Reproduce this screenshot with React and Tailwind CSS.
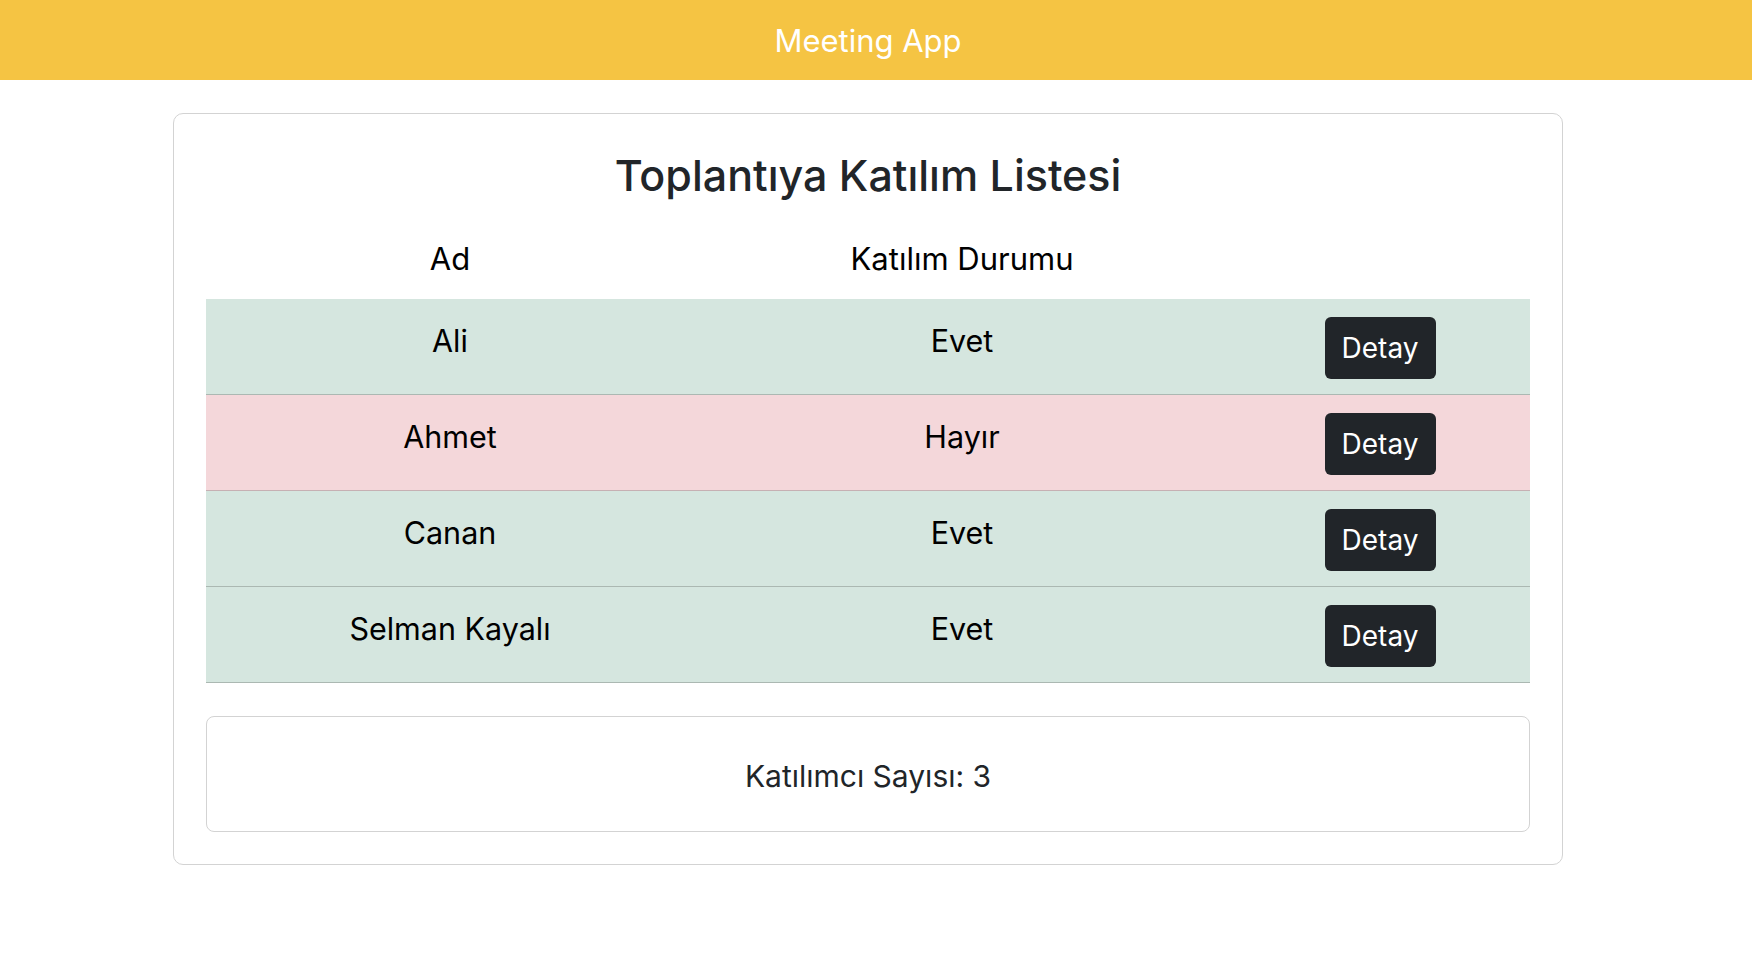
const attendees = [
  { name: 'Ali', status: 'Evet' },
  { name: 'Ahmet', status: 'Hayır' },
  { name: 'Canan', status: 'Evet' },
  { name: 'Selman Kayalı', status: 'Evet' },
]

function Row({ name, status }) {
  const yes = status === 'Evet'
  return (
    <div
      className={
        yes
          ? 'grid h-[96px] grid-cols-[488px_536px_300px] border-b border-[#abb8b2] bg-[#d5e6df] text-black'
          : 'grid h-[96px] grid-cols-[488px_536px_300px] border-b border-[#c6b0b3] bg-[#f4d7da] text-black'
      }
    >
      <div className="pt-[22px] text-center text-[30.5px] leading-[40px]">{name}</div>
      <div className="pt-[22px] text-center text-[30.5px] leading-[40px]">{status}</div>
      <div className="flex justify-center pt-[18px]">
        <button className="h-[62px] w-[111px] rounded-[6px] bg-[#212529] text-[28px] leading-[42px] text-white">
          Detay
        </button>
      </div>
    </div>
  )
}

export default function App() {
  const count = attendees.filter(a => a.status === 'Evet').length

  return (
    <div className="min-h-screen bg-white font-['Inter','Noto_Sans',sans-serif]">
      {/* ── Nav ── */}
      <header className="flex h-[80px] items-center bg-[#f5c443]">
        <div className="w-[1736px] pt-[2px] text-center text-[31px] leading-[40px] text-white">Meeting App</div>
      </header>

      <div className="w-[1736px]">
        {/* ── Card ── */}
        <main className="mx-auto mt-[33px] w-[1390px] rounded-[10px] border border-[#d3d3d3] px-8 pb-8 pt-[34px]">
          <h1 className="text-center text-[43px] font-medium leading-[54px] text-[#212529]">
            Toplantıya Katılım Listesi
          </h1>

          <div className="grid h-[97px] grid-cols-[488px_536px_300px] pt-[37px] text-[31px] leading-[40px] text-black">
            <div className="text-center">Ad</div>
            <div className="text-center">Katılım Durumu</div>
            <div />
          </div>

          {attendees.map(a => (
            <Row key={a.name} {...a} />
          ))}

          {/* Summary */}
          <div className="mt-[33px] flex h-[116px] items-center justify-center rounded-[8px] border border-[#d3d3d3] pt-[3px] text-[30px] leading-[42px] text-[#212529]">
            Katılımcı Sayısı: {count}
          </div>
        </main>
      </div>
    </div>
  )
}
